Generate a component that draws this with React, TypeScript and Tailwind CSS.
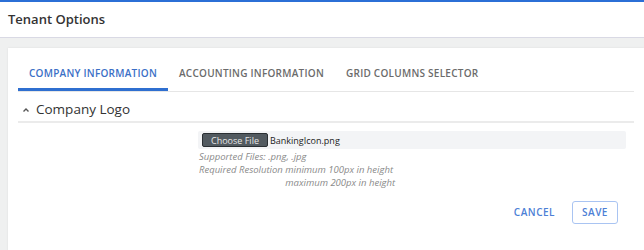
import * as React from "react";

const tabs = ["Company Information", "Accounting Information", "Grid Columns Selector"];

export default function App() {
    const [active, setActive] = React.useState(0);

    return (
        <div className="w-[644px] h-[250px] overflow-hidden bg-[#eff0f0] font-['Open_Sans',sans-serif] text-[#333]">
            <div className="h-[2px] bg-[#2b6fd6]" />
            <div className="h-[36px] bg-white border-b border-[#d9d9e4] px-2 flex items-center">
                <h1 className="text-[13px] font-semibold text-[#333]">Tenant Options</h1>
            </div>
            <div className="pl-2 pt-[10px]">
                <div className="bg-white h-[210px] px-[10px] shadow-[0_0_2px_rgba(0,0,0,0.08)]">
                    {/* tabs */}
                    <div className="flex border-b border-[#e6e6e6]">
                        {tabs.map((t, i) => (
                            <button
                                key={t}
                                onClick={() => setActive(i)}
                                className={
                                    i === active
                                        ? "px-[11px] pt-[18px] pb-[8px] border-b-[3px] border-[#2f6fd0] text-[10px] leading-[14px] font-semibold uppercase tracking-[0.025em] text-[#3b6fc6]"
                                        : "px-[11px] pt-[18px] pb-[8px] border-b-[3px] border-transparent text-[10px] leading-[14px] font-semibold uppercase tracking-[0.025em] text-[#6b6b6b]"
                                }
                            >
                                {t}
                            </button>
                        ))}
                    </div>

                    {/* Company Logo section */}
                    <div className="h-[31px] pt-[6px] flex items-center gap-[6px] border-b-2 border-[#ebebeb] pl-[4px]">
                        <svg width="8" height="8" viewBox="0 0 8 8" className="text-[#555]">
                            <path d="M1.5 5.5 L4 3 L6.5 5.5" fill="none" stroke="currentColor" strokeWidth="1.4" />
                        </svg>
                        <span className="text-[13.5px] text-[#333]">Company Logo</span>
                    </div>

                    <div className="pl-[180px] pr-[8px] pt-[8px]">
                        <div className="h-[18px] bg-[#f3f4f6] rounded-[2px] flex items-center pl-[4px] gap-[2px]">
                            <span className="h-[14px] w-[66px] bg-[#525a60] border border-[#2a2f33] rounded-[2px] flex items-center justify-center text-[9px] text-[#e6e6e6] leading-none">
                                Choose File
                            </span>
                            <span className="text-[9px] text-[#222] leading-none">BankingIcon.png</span>
                        </div>
                        <div className="pl-[1px] pt-[1px] text-[9.5px] italic text-[#8a8a8a] leading-[13px]">
                            <div>Supported Files: .png, .jpg</div>
                            <div className="flex">
                                <span className="whitespace-pre">Required Resolution </span>
                                <div>
                                    <div>minimum 100px in height</div>
                                    <div>maximum 200px in height</div>
                                </div>
                            </div>
                        </div>
                    </div>

                    <div className="flex justify-end items-center gap-[17px] pr-[16px] pt-[12px]">
                        <button className="text-[10px] font-semibold tracking-[0.05em] text-[#4d7fd6]">CANCEL</button>
                        <button className="h-[23px] w-[46px] border border-[#a9c4f2] rounded-[3px] text-[10px] font-semibold tracking-[0.05em] text-[#4d7fd6]">
                            SAVE
                        </button>
                    </div>
                </div>
            </div>
        </div>
    );
}
